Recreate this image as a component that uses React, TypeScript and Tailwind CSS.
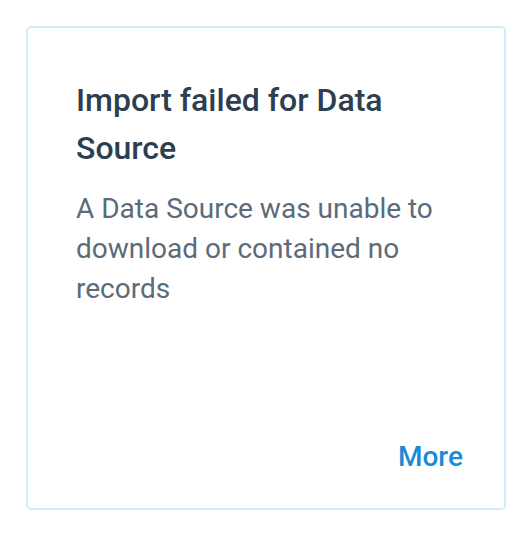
export default function App() {
  return (
    <div className="w-[532px] h-[534px] bg-white p-[26px]" style={{ fontFamily: "Roboto, sans-serif" }}>
      <div className="w-[480px] h-[484px] border-2 border-[#d3ebf6] rounded-[5px] flex flex-col pl-[48px] pr-[41px] pt-[48px] pb-[31px]">
        <h2 className="text-[32px] leading-[48px] font-medium text-[#2c3e50]">Import failed for Data Source</h2>
        <p className="mt-[17px] text-[28px] leading-[40px] text-[#5b6b79]">A Data Source was unable to download or contained no records</p>
        <div className="mt-auto flex justify-end">
          <span className="text-[28px] leading-[40px] font-medium text-[#1b8bd5]">More</span>
        </div>
      </div>
    </div>
  );
}
